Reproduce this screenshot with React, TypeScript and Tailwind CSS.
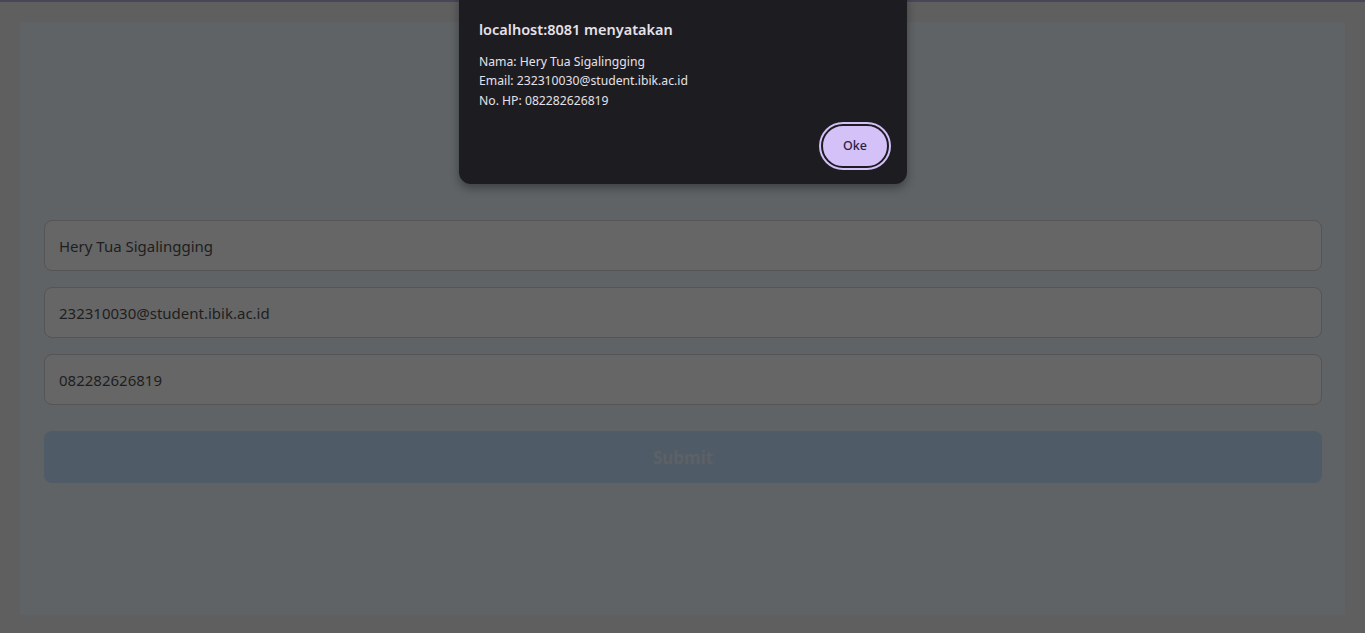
export default function App() {
  const fields = ['Hery Tua Sigalingging', '232310030@student.ibik.ac.id', '082282626819']

  return (
    <div
      className="relative h-[633px] w-full overflow-hidden bg-[#5f5f5f]"
      style={{ fontFamily: '"Noto Sans", "Open Sans", sans-serif' }}
    >
      {/* Top bar strip */}
      <div className="h-[2px] w-full bg-[#4a4659]" />

      {/* Form card */}
      <div className="mx-5 mt-5 h-[593px] bg-[#5f6366] pl-6 pr-[23px] pt-[198px]">
        <div className="flex flex-col gap-4">
          {fields.map((value) => (
            <div
              key={value}
              className="flex h-[51px] items-center rounded-lg border border-[#555555] bg-[#666666] px-[14px] pt-[2px] text-[15px] text-[#1e1e1e]"
            >
              {value}
            </div>
          ))}
        </div>
        <button className="mt-[26px] flex h-[52px] w-full items-center justify-center rounded-lg bg-[#4f5b66] pt-[2px] text-[17px] font-bold text-[#5d6166]">
          Submit
        </button>
      </div>

      {/* Alert dialog */}
      <div className="absolute left-[459px] top-[-12px] w-[448px] rounded-xl bg-[#1d1c21] pb-4 pl-5 pr-[18px] pt-[31px] shadow-[0_4px_10px_rgba(0,0,0,0.35)]">
        <div className="text-[14.5px] font-semibold text-[#e6e1e8]">localhost:8081 menyatakan</div>
        <div className="mt-[11px] text-[12.2px] leading-[19.5px] text-[#e6e1e8]">
          <div>Nama: Hery Tua Sigalingging</div>
          <div>Email: 232310030@student.ibik.ac.id</div>
          <div>No. HP: 082282626819</div>
        </div>
        <div className="mt-[14px] flex justify-end">
          <button className="flex h-[44px] w-[68px] items-center justify-center rounded-full border-2 border-[#1d1c21] bg-[#d4c1f8] text-[12.5px] font-medium text-[#2a2240] ring-2 ring-[#d4c1f8]">
            Oke
          </button>
        </div>
      </div>
    </div>
  )
}
